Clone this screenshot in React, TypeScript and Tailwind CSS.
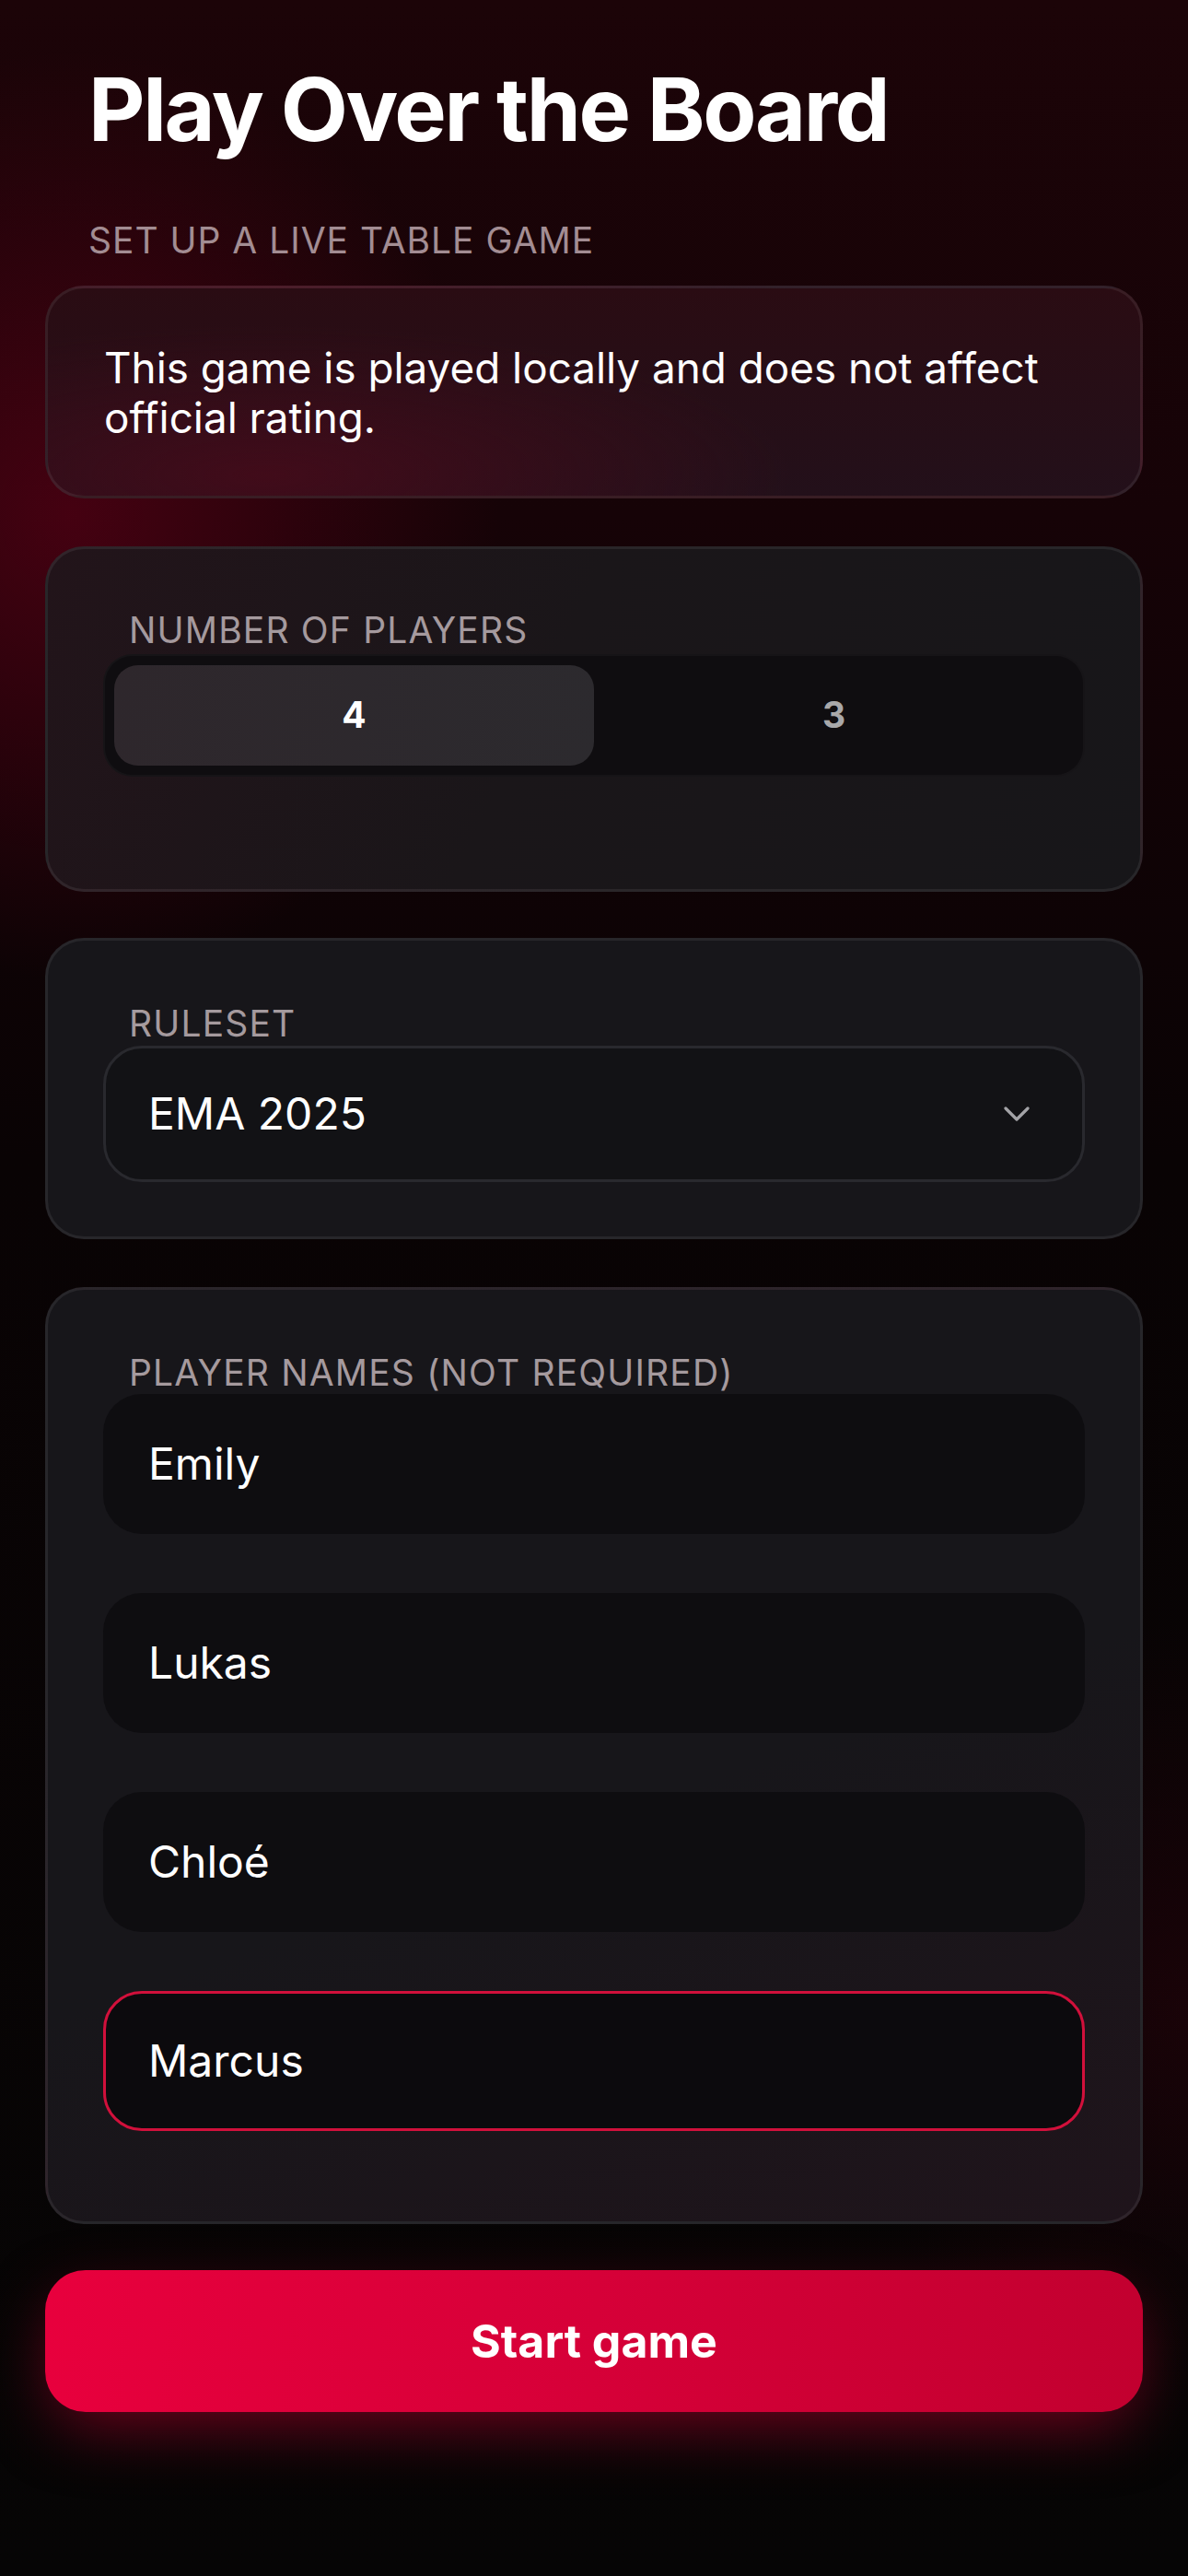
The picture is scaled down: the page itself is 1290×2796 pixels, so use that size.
import { useState } from "react";

const players = ["Emily", "Lukas", "Chloé", "Marcus"];

function SectionLabel({ children, className = "" }: { children: string; className?: string }) {
  return (
    <p
      className={`pl-[28px] text-[39px] leading-[47px] tracking-[0.03em] uppercase text-[#a59a9e] ${className}`}
    >
      {children}
    </p>
  );
}

function PlayerCountToggle() {
  const [count, setCount] = useState(4);

  return (
    <div className="flex h-[133px] rounded-[32px] border-[2px] border-white/[0.03] bg-[#0f0d10] p-[10px]">
      {[4, 3].map((value) => (
        <button
          className={
            value === count
              ? "flex-1 rounded-[26px] bg-[linear-gradient(100deg,#2e272c,#2c2a2e)] text-[39px] font-bold text-white"
              : "flex-1 rounded-[26px] text-[39px] font-bold text-[#a8a8aa]"
          }
          key={value}
          onClick={() => setCount(value)}
          type="button"
        >
          {value}
        </button>
      ))}
    </div>
  );
}

function RulesetSelect() {
  return (
    <div className="mt-[1px] flex h-[148px] items-center justify-between rounded-[42px] border-[3px] border-[#29292e] bg-[#121215] pl-[46px] pr-[57px]">
      <span className="text-[48px] text-white">EMA 2025</span>
      <svg aria-hidden="true" fill="none" height="18" viewBox="0 0 28 18" width="28">
        <polyline
          points="2,3 14,15 26,3"
          stroke="#a3a3a7"
          strokeLinecap="round"
          strokeLinejoin="round"
          strokeWidth="3.2"
        />
      </svg>
    </div>
  );
}

function PlayerInput({ name, active }: { name: string; active: boolean }) {
  return (
    <div
      className={
        active
          ? "flex h-[152px] items-center rounded-[42px] border-[3px] border-[#d1103b] bg-[#0c0a0d] pl-[46px]"
          : "flex h-[152px] items-center rounded-[42px] border-[3px] border-transparent bg-[#0e0d10] pl-[46px]"
      }
    >
      <span className="text-[48px] text-white">{name}</span>
    </div>
  );
}

export default function App() {
  return (
    <div className="min-h-[2796px] w-[1290px] bg-[radial-gradient(ellipse_48%_24%_at_6%_20%,rgba(100,0,24,0.6),transparent_75%),radial-gradient(ellipse_40%_20%_at_100%_78%,rgba(60,0,15,0.35),transparent_75%),linear-gradient(180deg,#1c0408_0%,#160307_20%,#090304_45%,#060505_100%)] px-[49px] pb-[170px] font-['Inter',sans-serif] text-white">
      <header className="pl-[47px]">
        <h1 className="pt-[67px] text-[95px] font-bold leading-[104px] tracking-[-0.025em]">
          Play Over the Board
        </h1>
        <p className="mt-[66px] text-[39px] leading-[47px] tracking-[0.025em] uppercase text-[#a38d93]">
          Set up a live table game
        </p>
      </header>

      <section className="mt-[26px] rounded-[42px] border-[3px] border-white/[0.07] bg-[radial-gradient(ellipse_60%_90%_at_20%_90%,rgba(75,10,26,0.75),transparent_80%),linear-gradient(180deg,#2a0c13,#23101a)] px-[61px] pb-[57px] pt-[60px]">
        <p className="text-[45.8px] leading-[54px] text-white">
          This game is played locally and does not affect official rating.
        </p>
      </section>

      <section className="mt-[52px] rounded-[42px] border-[3px] border-white/[0.07] bg-[linear-gradient(115deg,#22141a_0%,#1a1619_45%,#171619_100%)] px-[60px] pb-[122px] pt-[64px]">
        <SectionLabel>Number of players</SectionLabel>
        <div className="mt-[3px]">
          <PlayerCountToggle />
        </div>
      </section>

      <section className="mt-[50px] rounded-[42px] border-[3px] border-white/[0.07] bg-[#17161a] px-[60px] pb-[59px] pt-[66px]">
        <SectionLabel className="text-[#9e9c9f]">Ruleset</SectionLabel>
        <RulesetSelect />
      </section>

      <section className="mt-[52px] rounded-[42px] border-[3px] border-white/[0.07] bg-[linear-gradient(160deg,#17161a_0%,#17161a_55%,#1f141b_100%)] px-[60px] pb-[98px] pt-[66px]">
        <SectionLabel className="text-[#9e9c9f]">Player names (not required)</SectionLabel>
        <div className="flex flex-col gap-[64px]">
          {players.map((name, index) => (
            <PlayerInput active={index === players.length - 1} key={name} name={name} />
          ))}
        </div>
      </section>

      <button
        className="mt-[50px] flex h-[154px] w-full items-center justify-center rounded-[44px] bg-[linear-gradient(95deg,#e8003d_0%,#d60038_50%,#c2002f_100%)] text-[50px] font-bold text-white shadow-[0_24px_70px_-12px_rgba(225,0,55,0.5)]"
        type="button"
      >
        Start game
      </button>
    </div>
  );
}
